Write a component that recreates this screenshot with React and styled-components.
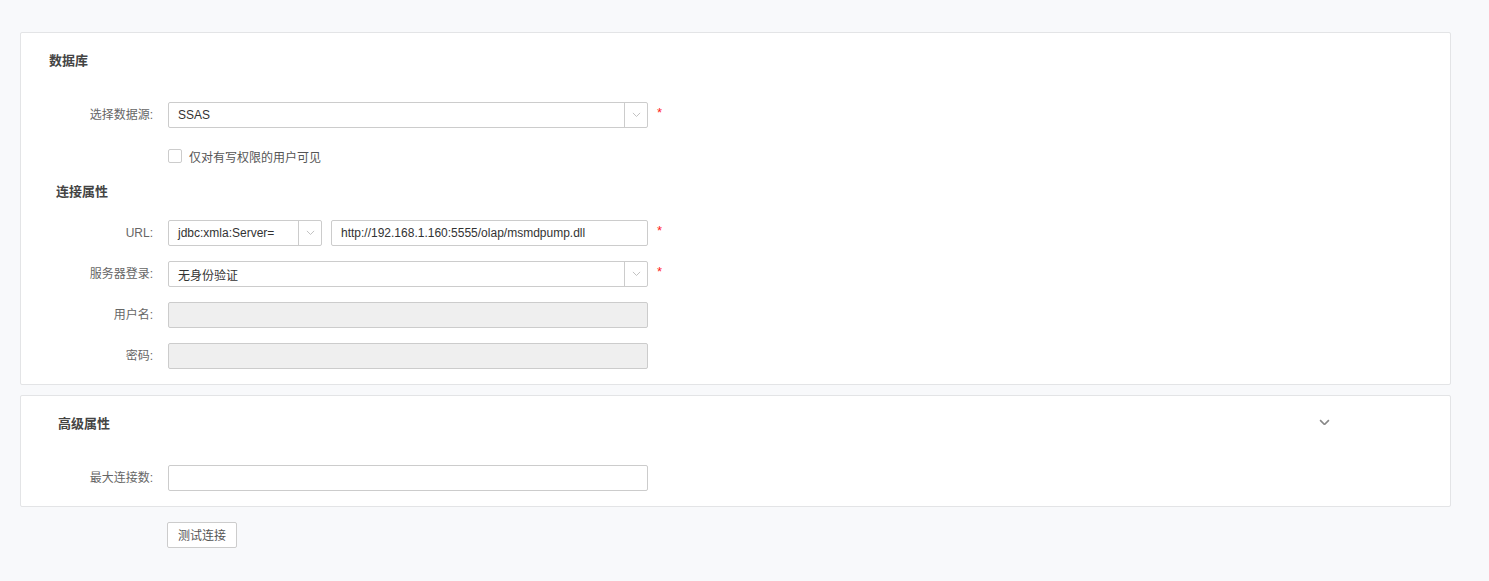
import React from 'react'
import styled, { createGlobalStyle } from 'styled-components';

const GlobalStyle = createGlobalStyle`
  body {
    margin: 0;
    background: #f8f9fb;
    font-family: "Liberation Sans", "Noto Sans CJK SC", sans-serif;
    font-size: 12px;
    color: #333;
  }
`

const Page = styled.div`
  padding: 32px 38px 30px 20px;
`

const Panel = styled.div`
  background: #fff;
  border: 1px solid #e3e4e6;
  border-radius: 2px;
  padding-bottom: 15px;
  margin-bottom: 10px;
`

const PanelHead = styled.div`
  display: flex;
  align-items: center;
  justify-content: space-between;
  height: 18px;
  margin: ${p => p.top || 17}px 0 ${p => p.bottom || 34}px;
  padding-left: ${p => p.indent}px;
  padding-right: 120px;
`

const Title = styled.div`
  font-size: 13px;
  font-weight: bold;
  color: #444;
`

const Row = styled.div`
  display: flex;
  align-items: center;
  height: 26px;
  margin-bottom: ${p => (p.last ? 0 : 15)}px;
`

const Label = styled.div`
  width: 132px;
  margin-right: 15px;
  text-align: right;
  color: #666;
  font-size: 12px;
  line-height: 14px;
  margin-top: -1px;
`

const Field = styled.div`
  display: flex;
  align-items: center;
  width: ${p => p.width || 480}px;
  height: 26px;
  box-sizing: border-box;
  border: 1px solid #ccc;
  border-radius: 2px;
  background: ${p => (p.disabled ? '#efefef' : '#fff')};
  color: #333;
  padding-left: 9px;
  margin-right: ${p => p.gap || 0}px;
`

const FieldText = styled.span`
  flex: 1;
`

const Arrow = styled.div`
  width: 22px;
  height: 100%;
  border-left: 1px solid #ccc;
  display: flex;
  align-items: center;
  justify-content: center;
`

const Required = styled.span`
  color: #f22;
  font-size: 13px;
  margin-left: 9px;
  align-self: flex-start;
  margin-top: 3px;
`

const CheckRow = styled.label`
  display: flex;
  align-items: center;
  height: 26px;
  padding-left: 147px;
  color: #555;
`

const Box = styled.span`
  width: 12px;
  height: 12px;
  border: 1px solid #ccc;
  border-radius: 2px;
  background: #fff;
  margin-right: 7px;
`

const Button = styled.button`
  margin-left: 147px;
  margin-top: 5px;
  width: 70px;
  height: 26px;
  background: #fff;
  border: 1px solid #ccc;
  border-radius: 2px;
  font-family: inherit;
  font-size: 12px;
  color: #555;
  padding: 0 0 1px;
`

const Chevron = ({ size = 9, color = '#bbb', width = 1 }) => (
  <svg width={size} height={size * 0.6} viewBox="0 0 10 6">
    <path d="M1 1 L5 5 L9 1" fill="none" stroke={color} strokeWidth={width} />
  </svg>
)

const Select = ({ value, width, gap }) => (
  <Field width={width} gap={gap} style={{ paddingRight: 0 }}>
    <FieldText>{value}</FieldText>
    <Arrow><Chevron /></Arrow>
  </Field>
)

const App = () => {
  return (
    <Page>
      <GlobalStyle />
      <Panel>
        <PanelHead indent={28}><Title>数据库</Title></PanelHead>
        <Row>
          <Label>选择数据源:</Label>
          <Select value="SSAS" />
          <Required>*</Required>
        </Row>
        <CheckRow>
          <Box />
          仅对有写权限的用户可见
        </CheckRow>
        <PanelHead indent={35} top={12} bottom={21}><Title>连接属性</Title></PanelHead>
        <Row>
          <Label>URL:</Label>
          <Select value="jdbc:xmla:Server=" width={154} gap={9} />
          <Field width={317}>http://192.168.1.160:5555/olap/msmdpump.dll</Field>
          <Required>*</Required>
        </Row>
        <Row>
          <Label>服务器登录:</Label>
          <Select value="无身份验证" />
          <Required>*</Required>
        </Row>
        <Row>
          <Label>用户名:</Label>
          <Field disabled />
        </Row>
        <Row last>
          <Label>密码:</Label>
          <Field disabled />
        </Row>
      </Panel>
      <Panel>
        <PanelHead indent={37}>
          <Title>高级属性</Title>
          <Chevron size={11} color="#888" width={1.5} />
        </PanelHead>
        <Row last>
          <Label>最大连接数:</Label>
          <Field />
        </Row>
      </Panel>
      <Button>测试连接</Button>
    </Page>
  )
}
export default App;
